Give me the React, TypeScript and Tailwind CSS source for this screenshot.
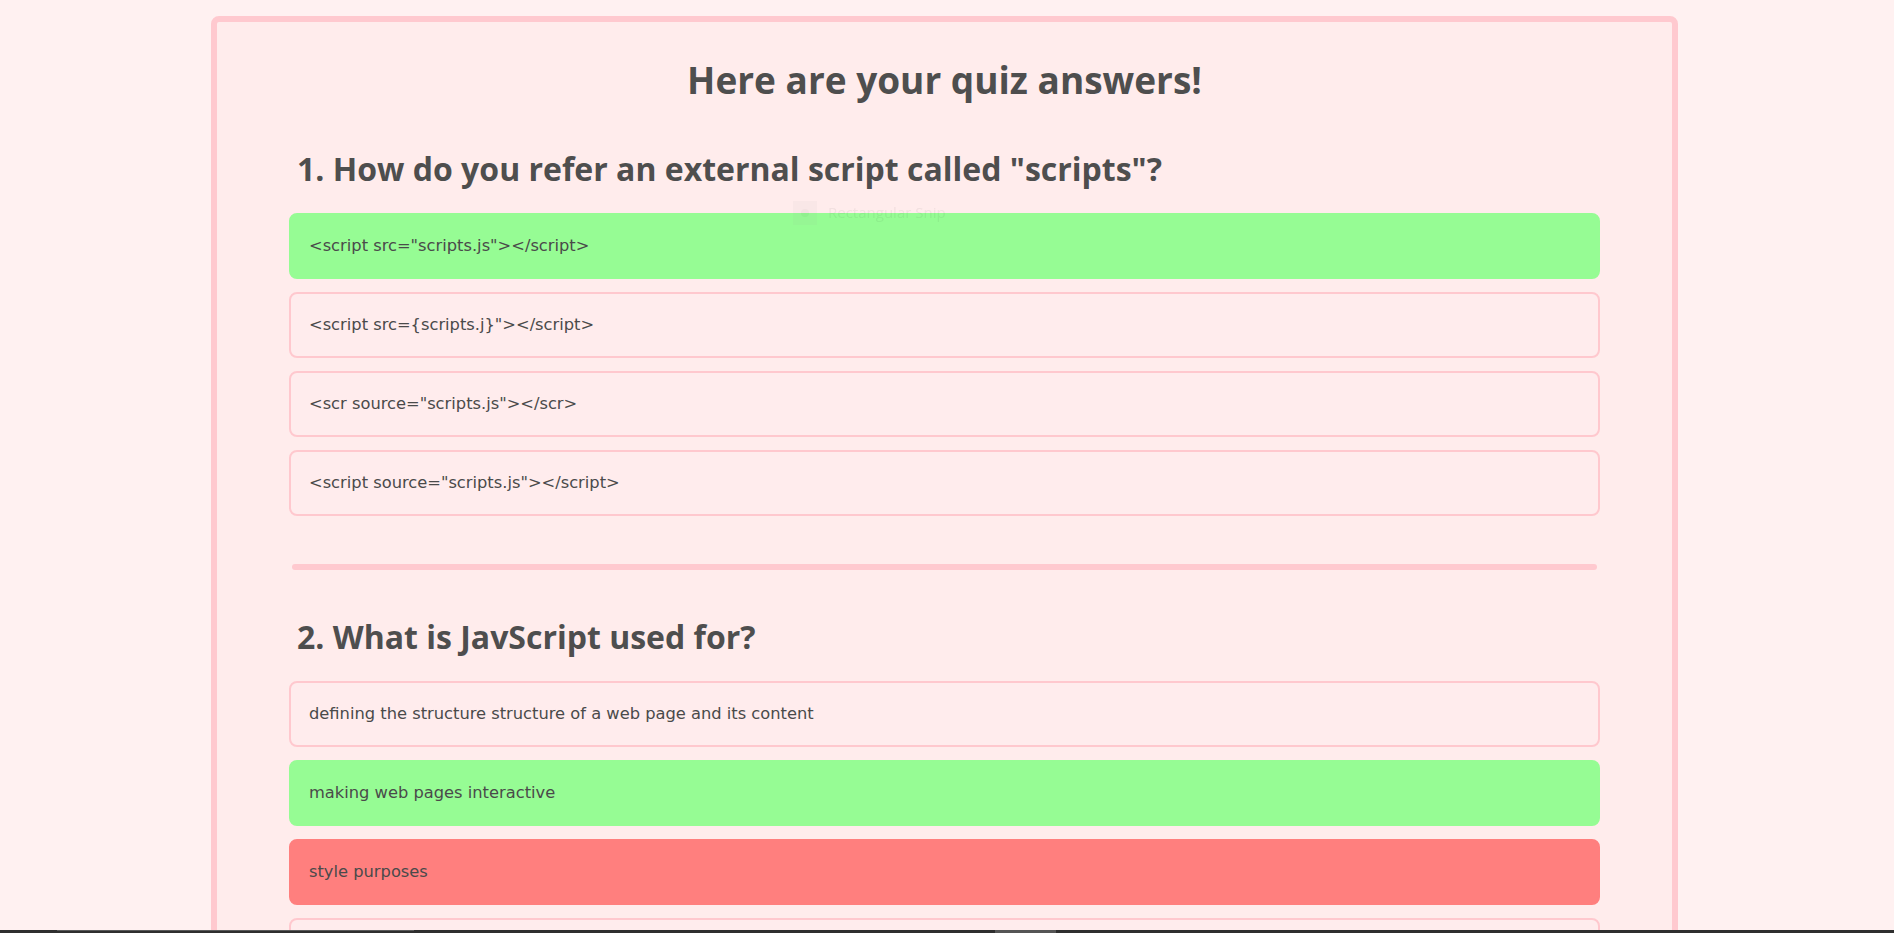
import React from "react";

type Answer = { text: string; state?: "correct" | "wrong" };
type Question = { title: string; answers: Answer[] };

const QUESTIONS: Question[] = [
  {
    title: '1. How do you refer an external script called "scripts"?',
    answers: [
      { text: '<script src="scripts.js"></script>', state: "correct" },
      { text: '<script src={scripts.j}"></script>' },
      { text: '<scr source="scripts.js"></scr>' },
      { text: '<script source="scripts.js"></script>' },
    ],
  },
  {
    title: "2. What is JavScript used for?",
    answers: [
      { text: "defining the structure structure of a web page and its content" },
      { text: "making web pages interactive", state: "correct" },
      { text: "style purposes", state: "wrong" },
      { text: "all of the above" },
    ],
  },
];

const headingFont = "font-['Open_Sans','Liberation_Sans',sans-serif]";

function AnswerRow({ answer }: { answer: Answer }) {
  const tone =
    answer.state === "correct"
      ? "bg-[#96fc94] border-[#96fc94]"
      : answer.state === "wrong"
      ? "bg-[#ff7f7e] border-[#ff7f7e]"
      : "bg-[#ffeced] border-[#ffc8ce]";
  return (
    <div
      className={`h-[66px] flex items-center pl-[18px] border-2 rounded-[8px] text-[16.3px] text-[#4a4a4a] font-['DejaVu_Sans',sans-serif] ${tone}`}
    >
      {answer.text}
    </div>
  );
}

function QuestionBlock({ q }: { q: Question }) {
  return (
    <section className="flex flex-col">
      <h2 className={`${headingFont} font-bold text-[32px] leading-[40px] text-[#4e4e4e] pl-[8px]`}>{q.title}</h2>
      <div className="mt-[24px] flex flex-col gap-[13px]">
        {q.answers.map((a) => (
          <AnswerRow key={a.text} answer={a} />
        ))}
      </div>
    </section>
  );
}

export default function App() {
  return (
    <div className="min-h-screen bg-[#fff1f1] pt-[16px] pb-[40px]">
      <div className="ml-[211px] w-[1467px] border-[6px] border-[#ffc9cf] rounded-[8px] bg-[#ffecec] px-[72px] pb-[60px]">
        <h1 className={`${headingFont} font-bold text-[37px] leading-[44px] text-[#4e4e4e] text-center mt-[36px]`}>
          Here are your quiz answers!
        </h1>

        <div className="mt-[47px]">
          <QuestionBlock q={QUESTIONS[0]} />
        </div>

        <div className="mt-[48px] mx-[3px] h-[6px] rounded-full bg-[#ffc9cf]" />

        <div className="mt-[47px]">
          <QuestionBlock q={QUESTIONS[1]} />
        </div>
      </div>

      {/* faint snipping tool hint left over in the capture */}
      <div className="fixed left-[793px] top-[200px] w-[200px] h-[25px] flex items-center gap-[11px] opacity-[0.06] pointer-events-none">
        <div className="w-[24px] h-[24px] bg-[#9a9a9a] flex items-center justify-center">
          <div className="w-[8px] h-[8px] rounded-full bg-[#333]" />
        </div>
        <span className="text-[15px] text-[#222] font-['Open_Sans',sans-serif]">Rectangular Snip</span>
      </div>

      {/* bottom edge of the desktop taskbar */}
      <div className="fixed left-0 right-0 bottom-0 h-[3px] bg-[#2e2e2e] flex">
        <div className="ml-[57px] w-[357px] h-[1px] bg-[#5a5a5a]" />
        <div className="ml-[581px] w-[61px] h-[3px] bg-[#555]" />
      </div>
    </div>
  );
}
